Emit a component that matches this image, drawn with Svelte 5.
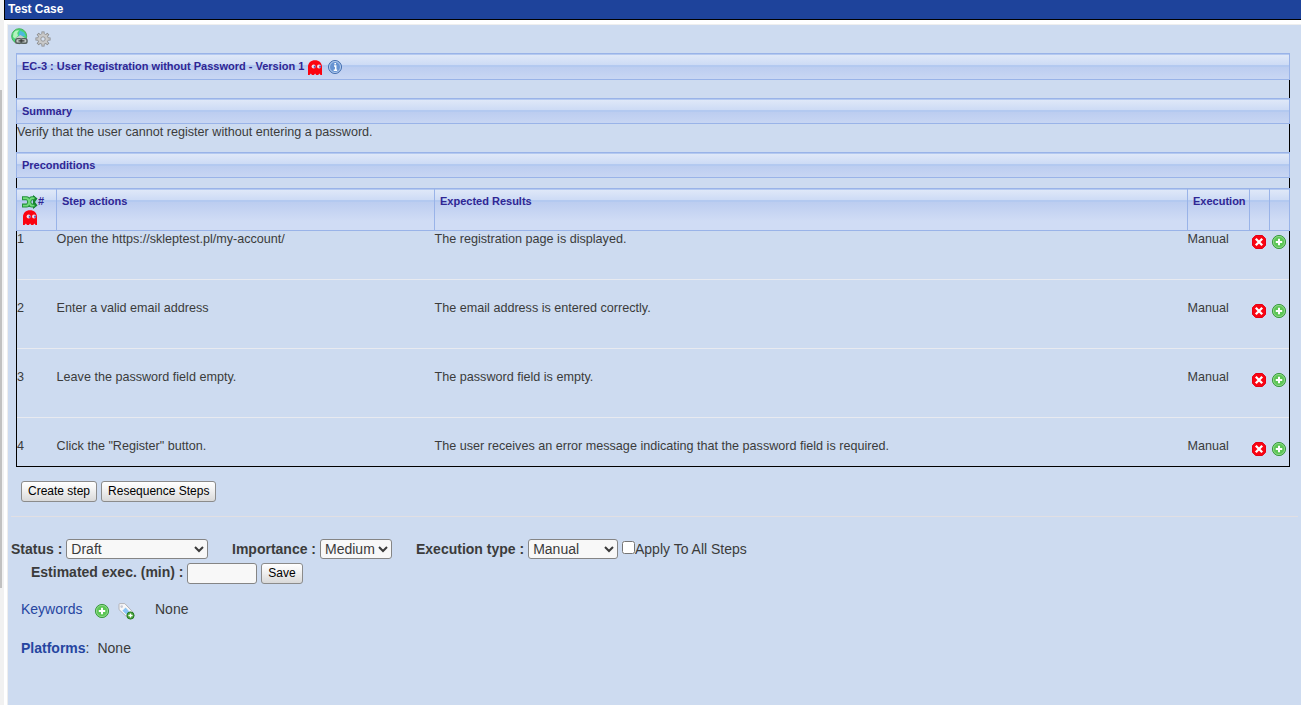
<script>
  const steps = [
    ['Open the https://skleptest.pl/my-account/', 'The registration page is displayed.'],
    ['Enter a valid email address', 'The email address is entered correctly.'],
    ['Leave the password field empty.', 'The password field is empty.'],
    ['Click the "Register" button.', 'The user receives an error message indicating that the password field is required.']
  ];
  let status = $state('Draft');
  let importance = $state('Medium');
  let execution = $state('Manual');
</script>

{#snippet ghost()}
  <svg class="ghost" width="14" height="16" viewBox="0 0 14 16">
    <path fill="#fb0310" d="M0 15V7C0 3 3 .3 7 .3S14 3 14 7v8h-1.4l-1.2-1.5L10.2 15H8.3l-1.2-1.5L5.9 15H4L2.9 13.5 1.5 15z" />
    <ellipse cx="5.6" cy="6.5" rx="2" ry="2.1" fill="#f3dfe8" /><ellipse cx="11" cy="6.5" rx="2" ry="2.1" fill="#f3dfe8" />
    <rect x="5.8" y="5.7" width="1.7" height="2" fill="#4650b8" /><rect x="11.2" y="5.7" width="1.7" height="2" fill="#4650b8" />
  </svg>
{/snippet}

{#snippet add()}
  <svg width="16" height="16" viewBox="0 0 16 16">
    <circle cx="8" cy="8" r="6.6" fill="#5cc655" stroke="#3c9a42" />
    <circle cx="8" cy="8" r="5.6" fill="none" stroke="#9bdc96" stroke-width=".8" />
    <path d="M8 4.8v6.4M4.8 8h6.4" stroke="#fff" stroke-width="2" />
  </svg>
{/snippet}

{#snippet remove()}
  <svg width="16" height="16" viewBox="0 0 16 16">
    <path fill="#f90512" stroke="#e60016" d="M4.6 1.5h6.8l3.1 3.1v6.8l-3.1 3.1H4.6l-3.1-3.1V4.6z" />
    <path d="M4.8 4.8l6.4 6.4M11.2 4.8l-6.4 6.4" stroke="#fff" stroke-width="2.3" />
  </svg>
{/snippet}

<div class="frame">
  <div class="gutter"><div class="thumb"></div></div>
  <main>
    <h1>Test Case</h1>
    <div class="panel">
      <div class="tools">
        <svg width="17" height="17" viewBox="0 0 17 17">
          <circle cx="8.2" cy="8.2" r="7.5" fill="#45d878" stroke="#4bb35b" />
          <path d="M2.5 5C4 2.5 6 2 8 2.2L6.2 5 7 7.5 4 10.5 2 9z" fill="#b5f3bd" />
          <path d="M9 2.5l4 2 1.8 4-3-.8-2 1.5L7.5 7z" fill="#4cb9dc" />
          <path d="M4.5 10L9.5 7l6 4v5h-11z" fill="#c3cac8" />
          <rect x="4.7" y="10.6" width="6" height="4.6" rx="1.8" fill="none" stroke="#555f5c" stroke-width="1.4" />
          <rect x="10" y="10.6" width="6" height="4.6" rx="1.8" fill="none" stroke="#555f5c" stroke-width="1.4" />
          <path d="M7.5 12.9h6" stroke="#333" stroke-width="1.2" />
        </svg>
        <svg class="gear" width="16" height="16" viewBox="0 0 16 16">
          <path d="M8 .5v15M.5 8h15M2.7 2.7l10.6 10.6M13.3 2.7L2.7 13.3" stroke="#858585" stroke-width="3" />
          <circle cx="8" cy="8" r="5.6" fill="#8e8e8e" />
          <path d="M8 1.2v13.6M1.2 8h13.6M3.2 3.2l9.6 9.6M12.8 3.2l-9.6 9.6" stroke="#c9c9c9" stroke-width="1.6" />
          <circle cx="8" cy="8" r="4.9" fill="#c9c9c9" />
          <circle cx="8" cy="8" r="2.2" fill="#d6e1f1" stroke="#919191" stroke-width=".9" />
        </svg>
      </div>

      <section class="case">
        <h2 class="bar first">
          <span>EC-3 : User Registration without Password - Version 1</span>
          {@render ghost()}
          <svg class="info" width="16" height="16" viewBox="0 0 16 16">
            <circle cx="8" cy="8" r="6.5" fill="#6793d2" stroke="#456eae" />
            <circle cx="8" cy="8" r="5.5" fill="none" stroke="#bdd2ef" stroke-width=".9" />
            <path d="M7 7h1.7v4.2M6.7 11.3h3.5M7.4 4.8h1.6" fill="none" stroke="#fff" stroke-width="1.5" />
          </svg>
        </h2>
        <div class="body blank"></div>
        <h2 class="bar">Summary</h2>
        <div class="body text">Verify that the user cannot register without entering a password.</div>
        <h2 class="bar">Preconditions</h2>
        <div class="body thin"></div>
        <div class="bar cols grid">
          <div class="number">
            <svg width="16" height="14" viewBox="0 0 16 14">
              <path d="M0 3.2h4.5c3.5 0 2 7.4 5.5 7.4h3M0 10.6h4.5c3.5 0 2-7.4 5.5-7.4h3" fill="none" stroke="#23903a" stroke-width="4" />
              <path d="M11 0l4.5 3.6L13 7l2.5 3.4L11 14z" fill="#16852f" />
              <path d="M1 3.2h3.5c3.5 0 2 7.4 5.5 7.4h2.5M1 10.6h3.5c3.5 0 2-7.4 5.5-7.4h2.5" fill="none" stroke="#72db7b" stroke-width="1.9" />
            </svg><span>#</span>
            {@render ghost()}
          </div>
          <div>Step actions</div>
          <div>Expected Results</div>
          <div>Execution</div>
          <div></div>
          <div></div>
        </div>
        {#each steps as [action, result], i}
          <div class="grid step" class:top={i === 0} class:last={i === steps.length - 1}>
            <div>{i + 1}</div>
            <div>{action}</div>
            <div>{result}</div>
            <div>Manual</div>
            <div class="ico">{@render remove()}</div>
            <div class="ico">{@render add()}</div>
          </div>
        {/each}
      </section>

      <div class="actions">
        <button>Create step</button>
        <button>Resequence Steps</button>
      </div>
      <div class="rule"></div>

      <div class="fields">
        <label class="status"><b>Status :</b>
          <select bind:value={status}><option>Draft</option></select></label>
        <label class="importance"><b>Importance :</b>
          <select bind:value={importance}><option>Medium</option></select></label>
        <label class="execution"><b>Execution type :</b>
          <select bind:value={execution}><option>Manual</option></select></label>
        <label class="all"><input type="checkbox" /><span>Apply To All Steps</span></label>
      </div>
      <div class="estimate">
        <b>Estimated exec. (min) :</b>
        <input type="text" />
        <button>Save</button>
      </div>
      <div class="keywords">
        <a>Keywords</a>
        {@render add()}
        <svg class="tag" width="17" height="17" viewBox="0 0 17 17">
          <path d="M1 1.5Q1 .6 2 .6h4.8l8 8.4-5.3 5.6L1 6.6z" fill="#f7f7f8" stroke="#b2b3b9" />
          <path d="M7.6 4.4l4.7 5-3 3.2-4.9-4.9z" fill="#8bc5f5" />
          <circle cx="3.7" cy="3.6" r="1.3" fill="#c3c9d6" />
          <circle cx="12.5" cy="12.5" r="3.6" fill="#45a536" stroke="#287824" />
          <path d="M12.5 10.4v4.2M10.4 12.5h4.2" stroke="#fff" stroke-width="1.3" />
        </svg>
        <span>None</span>
      </div>
      <div class="platforms"><a><b>Platforms</b></a>:<span>None</span></div>
    </div>
  </main>
</div>

<style>
  :global(body) { margin: 0; overflow: hidden; }
  * { box-sizing: border-box; }
  .frame { display: flex; width: 1301px; height: 705px; background: #fff; color: #3b3b3b; font-family: "Liberation Sans", Arial, sans-serif; }
  .gutter { width: 4px; flex: none; padding-top: 90px; background: #f1f1f1; }
  .thumb { width: 2px; height: 498px; background: #c1c1c1; }
  main { flex: 1; min-width: 0; display: flex; flex-direction: column; }
  h1 { margin: 0 0 4px; height: 20px; padding-left: 3px; border-left: 1px solid #000; border-bottom: 1px solid #000; background: #1e439b; color: #fff; font-size: 11.9px; line-height: 18px; }
  .panel { flex: 1; margin-left: 3px; border: 1px solid #eee; border-right: 0; border-bottom: 0; background: #cddbf0; }
  .tools { height: 28px; padding: 3px 0 0 3px; display: flex; gap: 7px; }
  .gear { margin-top: 3px; }
  .case { width: 1274px; margin-left: 8px; font-size: 12.6px; }
  .bar { margin: 0; height: 26px; padding: 0 5px; border: 1px solid #99b3e8; display: flex; align-items: flex-start; color: #2f2694; font-size: 11px; font-weight: bold; line-height: 24px; background: #d0dcf5 linear-gradient(#b4c9f0 0 1px, #dfe8f8 1px, #cddbf5 11px, #b3c9f0 11px 13px, #bccdf0 13px, #d0dcf5 32px) no-repeat; }
  .bar.first { height: 27px; }
  .bar .ghost { margin: 6px 0 0 4px; }
  .info { margin: 5px 0 0 5px; }
  .body { border: solid #000; border-width: 0 1px; }
  .blank { height: 18px; }
  .text { height: 28px; line-height: 16px; }
  .thin { height: 10px; }
  .grid { display: grid; grid-template-columns: 39px 378px 753px 62px 20px 1fr; }
  .bar.cols { height: 43px; padding: 0; }
  .cols > div { height: 41px; padding-left: 5px; }
  .cols > div + div { border-left: 1px solid #99b3e8; }
  .cols .number { display: grid; grid-template-columns: 16px 1fr; grid-template-rows: 20px 18px; }
  .number > svg:first-child { margin-top: 6px; }
  .bar .number .ghost { margin: 1px 0 0 1px; }
  .step { height: 69px; padding-top: 20px; border: solid #000; border-width: 0 1px; line-height: 16px; background: linear-gradient(#e8eaf0, #e8eaf0) left bottom / 100% 1px no-repeat; }
  .step > div + div { padding-left: .6px; }
  .step.top { height: 49px; padding-top: 0; }
  .step.last { height: 49px; border-bottom-width: 1px; background: none; }
  .step > .ico { padding: 3px 0 0 2px; }
  .ico svg { display: block; }
  button { height: 21px; padding: 0 6px 1px; border: 1px solid #8b8b8b; border-radius: 3px; background: linear-gradient(#fff, #f4f4f4 35%, #d9d9d9); color: #000; font: 12px/18px "Liberation Sans", Arial, sans-serif; }
  .actions { display: flex; gap: 4px; padding: 14px 0 14px 13px; }
  .rule { height: 1px; margin: 0 3px; background: #e1dfe3; }
  .fields, .estimate, .keywords, .platforms { font-size: 14px; display: flex; }
  .fields { padding: 22px 0 0 3px; line-height: 20px; }
  .fields label { display: flex; gap: 4px; }
  select { height: 20px; padding: 0; border: 1px solid #858585; border-radius: 3px; background: #f8f8f8; color: #3b3b3b; font: 14px "Liberation Sans", Arial, sans-serif; }
  .status { width: 221px; } .status select { width: 142px; }
  .importance { width: 184px; } .importance select { width: 72px; }
  .execution { width: 206px; } .execution select { width: 90px; }
  .fields .all { gap: 0; }
  .all input { margin: 2px 0 0; width: 13px; height: 13px; }
  .estimate { padding: 4px 0 0 23px; gap: 4px; line-height: 19px; }
  .estimate b { width: 152px; white-space: nowrap; }
  .estimate input { width: 70px; height: 21px; border: 1px solid #858585; border-radius: 3px; background: #f8f8f8; }
  .estimate button { width: 42px; }
  a { color: #2545a0; }
  .keywords { padding: 15px 0 0 13px; line-height: 20px; }
  .keywords a { width: 73px; }
  .keywords svg { margin-top: 4px; }
  .keywords .tag { margin: 4px 20px 0 8px; }
  .platforms { padding: 18px 0 0 13px; line-height: 20px; }
  .platforms span { margin-left: 8px; }
</style>
